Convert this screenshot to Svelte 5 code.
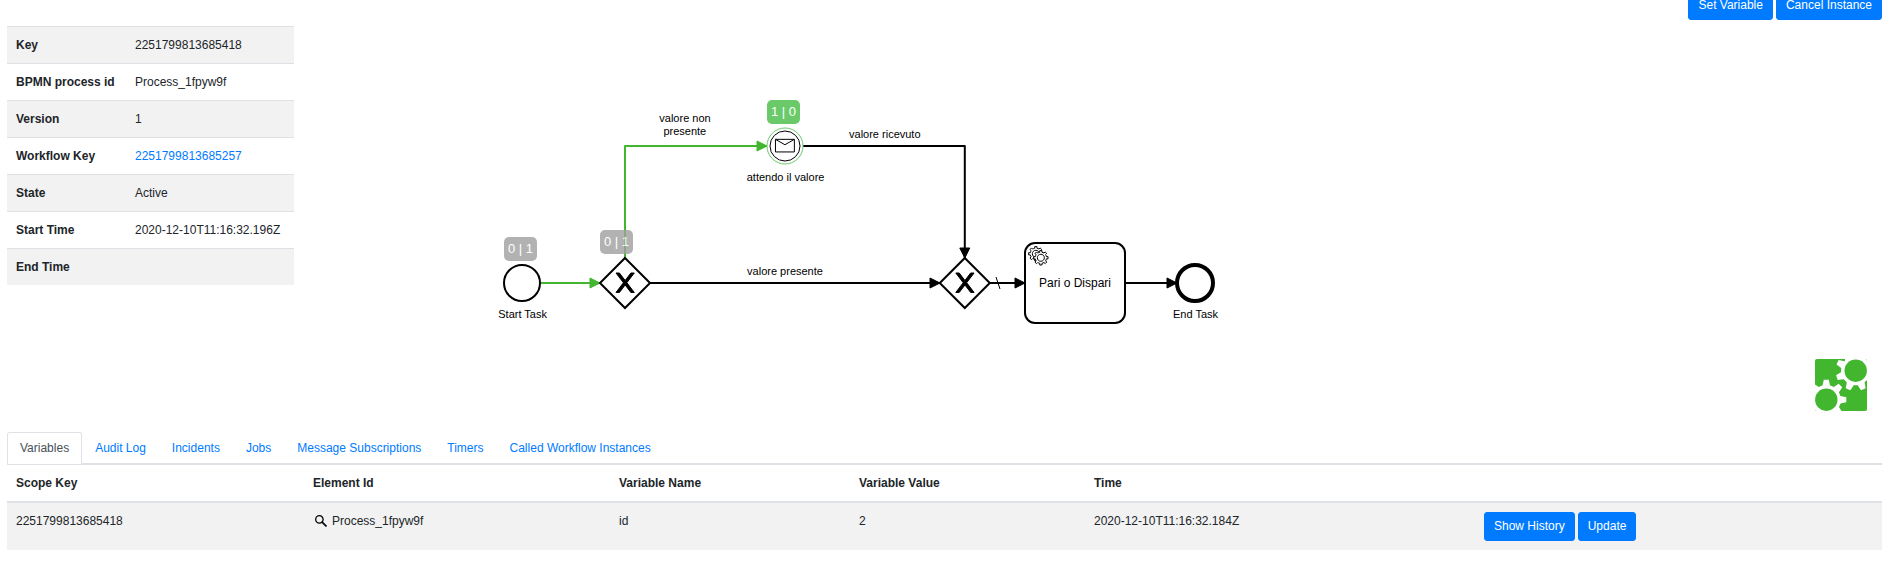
<script>
  const details = [
    ['Key', '2251799813685418'],
    ['BPMN process id', 'Process_1fpyw9f'],
    ['Version', '1'],
    ['Workflow Key', '2251799813685257', true],
    ['State', 'Active'],
    ['Start Time', '2020-12-10T11:16:32.196Z'],
    ['End Time', ''],
  ];
  const tabs = ['Variables', 'Audit Log', 'Incidents', 'Jobs', 'Message Subscriptions', 'Timers', 'Called Workflow Instances'];
  const badges = [
    { x: 210, y: 237, text: '0 | 1', kind: 'ended' },
    { x: 306, y: 230, text: '0 | 1', kind: 'ended' },
    { x: 473, y: 100, text: '1 | 0', kind: 'active' },
  ];
  const logoGears = [
    { x: 40.7, y: 11.7, teeth: [67.5, 112.5, 160, 205] },
    { x: 11.3, y: 40.7, teeth: [225, 270, 315, 0, 45] },
  ];
  const cross =
    'm16,15 7.4286,9.7143 -7.4286,9.7143 3.4286,0 5.7143,-7.4642 5.7143,7.4642 3.4286,0 -7.4286,-9.7143 7.4286,-9.7143 -3.4286,0 -5.7143,7.4642 -5.7143,-7.4642 -3.4286,0z';
  const gear =
    'm 12,18 v -1.71335 c 0.352326,-0.0705 0.703932,-0.17838 1.047628,-0.32133 0.344416,-0.14465 0.665822,-0.32133 0.966377,-0.52145 l 1.19431,1.18005 1.567487,-1.57688 -1.195028,-1.18014 c 0.403376,-0.61394 0.683079,-1.29908 0.825447,-2.01824 l 1.622133,-0.01 v -2.2196 l -1.636514,0.01 c -0.07333,-0.35153 -0.178319,-0.70024 -0.323564,-1.04372 -0.145244,-0.34406 -0.321407,-0.6644 -0.522735,-0.96217 l 1.131035,-1.13631 -1.583305,-1.56293 -1.129598,1.13589 c -0.614052,-0.40108 -1.302883,-0.68093 -2.022633,-0.82247 l 0.0093,-1.61852 h -2.241173 l 0.0042,1.63124 c -0.353763,0.0736 -0.705369,0.17977 -1.049785,0.32371 -0.344415,0.14437 -0.665102,0.32092 -0.9635006,0.52006 l -1.1698628,-1.15823 -1.5667691,1.5792 1.1684265,1.15669 c -0.4026573,0.61283 -0.68308,1.29797 -0.8247287,2.01713 l -1.6588041,0.003 v 2.22174 l 1.6724648,-0.006 c 0.073327,0.35077 0.1797598,0.70243 0.3242851,1.04472 0.1452428,0.34448 0.3214064,0.6644 0.5227339,0.96066 l -1.1993431,1.19723 1.5840256,1.56011 1.1964668,-1.19348 c 0.6140517,0.40346 1.3028827,0.68232 2.0233517,0.82331 l 7.19e-4,1.69892 h 2.226848 z m 0.221462,-3.9957 c -1.788948,0.7502 -3.8576,-0.0928 -4.6097055,-1.87438 -0.7521065,-1.78321 0.090598,-3.84627 1.8802645,-4.59604 1.78823,-0.74936 3.856881,0.0929 4.608987,1.87437 0.752106,1.78165 -0.0906,3.84612 -1.879546,4.59605 z';
</script>

<div class="page">
  <section class="top">
    <table class="details">
      <tbody>
        {#each details as [label, value, link]}
          <tr><th>{label}</th><td>{#if link}<a href="#workflow">{value}</a>{:else}{value}{/if}</td></tr>
        {/each}
      </tbody>
    </table>
    <div class="canvas">
      <svg width="1580" height="430" viewBox="294 0 1580 430">
        <defs>
          <marker id="arrow" viewBox="0 0 20 20" refX="11" refY="10" markerWidth="10" markerHeight="10" orient="auto"><path d="M1 5 11 10 1 15Z" fill="#000" stroke="#000" /></marker>
          <marker id="arrow-green" viewBox="0 0 20 20" refX="11" refY="10" markerWidth="10" markerHeight="10" orient="auto"><path d="M1 5 11 10 1 15Z" fill="#42b62e" stroke="#42b62e" /></marker>
          <marker id="slash" viewBox="0 0 20 20" refX="0" refY="10" markerWidth="10" markerHeight="10" orient="auto"><path d="M6 4 10 16" stroke="#000" /></marker>
          <clipPath id="logo-square"><rect width="52" height="52" rx="2" /></clipPath>
        </defs>
        <g class="flow taken">
          <path d="M540 283H600" />
          <path d="M625 258V146H767" />
        </g>
        <g class="flow">
          <path d="M650 283H940" />
          <path d="M803 146H964.8V258" />
          <path d="M990 283H1025" marker-start="url(#slash)" />
          <path d="M1125 283H1177" />
        </g>
        <g class="shape">
          <circle cx="522" cy="283" r="18" />
          <path d="M625 258 650 283 625 308 600 283Z" />
          <path d="M964.8 258 989.8 283 964.8 308 939.8 283Z" />
          <rect x="1025" y="243" width="100" height="80" rx="10" />
          <circle cx="1195" cy="283" r="18" stroke-width="4" />
        </g>
        <path d={cross} transform="translate(600 258)" stroke="#000" />
        <path d={cross} transform="translate(939.8 258)" stroke="#000" />
        <g fill="#fff" stroke="#000">
          <circle cx="785" cy="146" r="18" stroke="#6bcb6b" />
          <circle cx="785" cy="146" r="15" />
          <path d="m775.46,139.34v12.6h18.9v-12.6zl9.45,5.4 9.45,-5.4" />
          <path d={gear} transform="translate(1025 243)" />
          <circle cx="1041" cy="257" r="4" stroke="none" />
          <path d={gear} transform="translate(1030 247)" />
        </g>
        <g class="labels">
          <text x="522.6" y="318">Start Task</text>
          <text x="685" y="122">valore non</text>
          <text x="684.8" y="135">presente</text>
          <text x="785.6" y="181">attendo il valore</text>
          <text x="884.8" y="138">valore ricevuto</text>
          <text x="785" y="275">valore presente</text>
          <text x="1195.5" y="318">End Task</text>
          <text x="1075" y="287" class="task">Pari o Dispari</text>
        </g>
        <g transform="translate(1815 359)" clip-path="url(#logo-square)">
          <rect width="52" height="52" fill="#42b62e" />
          <rect x="30" width="22" height="20" fill="#fff" />
          <rect y="33" width="24" height="19" fill="#fff" />
          {#each logoGears as g}
            <g transform="translate({g.x} {g.y})">
              <circle r="14.6" fill="#fff" />
              {#each g.teeth as angle}
                <path d="M13-4 20-2.5V2.5L13 4Z" transform="rotate({angle})" fill="#fff" />
              {/each}
              <circle r="11.2" fill="#42b62e" />
            </g>
          {/each}
        </g>
      </svg>
      {#each badges as b}
        <span class="badge {b.kind}" style="left:{b.x}px;top:{b.y}px">{b.text}</span>
      {/each}
      <div class="actions"><button>Set Variable</button><button>Cancel Instance</button></div>
    </div>
  </section>

  <nav>
    {#each tabs as tab, i}<a href="#tab{i}" class:active={i === 0}>{tab}</a>{/each}
  </nav>
  <table class="variables">
    <colgroup><col style="width:297px" /><col style="width:306px" /><col style="width:240px" /><col style="width:235px" /><col style="width:390px" /><col /></colgroup>
    <thead><tr><th>Scope Key</th><th>Element Id</th><th>Variable Name</th><th>Variable Value</th><th>Time</th><th></th></tr></thead>
    <tbody>
      <tr>
        <td>2251799813685418</td>
        <td><span class="element"><svg width="12" height="12" viewBox="0 0 12 12"><circle cx="4.4" cy="4.4" r="3.7" fill="none" stroke="#000" stroke-width="1.3" /><path d="m7.1 7.1 4.4 4.4" stroke="#000" stroke-width="1.6" /></svg>Process_1fpyw9f</span></td>
        <td>id</td><td>2</td><td>2020-12-10T11:16:32.184Z</td>
        <td><div class="row-actions"><button>Show History</button><button>Update</button></div></td>
      </tr>
    </tbody>
  </table>
</div>

<style>
  :global(body) { background: #fff; overflow: hidden; }
  .page { height: 588px; padding: 0 9px 0 7px; box-sizing: border-box; overflow: hidden; font: 12px/18px "Liberation Sans", Arial, sans-serif; color: #212529; }
  .top { display: flex; height: 432px; }
  table { border-collapse: separate; border-spacing: 0; }
  th, td { padding: 9px; text-align: left; vertical-align: top; }
  a { color: #007bff; text-decoration: none; }
  .details { width: 287px; margin-top: 26px; align-self: flex-start; }
  .details th, .details td { height: 18px; border-top: 1px solid #dee2e6; }
  .details th { width: 101px; white-space: nowrap; }
  .details tr:nth-child(odd), .variables tbody tr { background: #f2f2f2; }
  .canvas { position: relative; flex: 1; min-width: 0; }
  .canvas > svg { display: block; }
  .flow path { fill: none; stroke: #000; stroke-width: 2; marker-end: url(#arrow); stroke-linejoin: round; }
  .flow.taken path { stroke: #42b62e; marker-end: url(#arrow-green); }
  .shape { fill: #fff; stroke: #000; stroke-width: 2; }
  .labels { font-size: 11px; text-anchor: middle; fill: #000; }
  .task { font-size: 12px; }
  .badge { position: absolute; width: 33px; height: 24px; line-height: 24px; font-size: 13px; border-radius: 5px; color: #fff; text-align: center; white-space: nowrap; opacity: .8; }
  .ended { background: #a0a0a0; }
  .active { background: #46be46; }
  .actions { position: absolute; right: 0; top: -9px; display: flex; gap: 3px; }
  button { height: 29px; padding: 0 9px 2px; border: 1px solid #007bff; border-radius: 3px; background: #007bff; color: #fff; font: inherit; }
  nav { display: flex; height: 32px; border-bottom: 1px solid #dee2e6; box-sizing: border-box; }
  nav a { height: 32px; padding: 6px 12px; border: 1px solid transparent; border-bottom: 0; box-sizing: border-box; line-height: 19px; }
  nav a.active { color: #495057; background: #fff; border-color: #dee2e6; border-radius: 3px 3px 0 0; }
  .variables { width: 100%; table-layout: fixed; }
  .variables thead th { border-top: 1px solid #dee2e6; border-bottom: 2px solid #dee2e6; }
  .element { display: flex; align-items: center; gap: 5px; padding-left: 2px; }
  .row-actions { display: flex; gap: 3px; }
</style>
